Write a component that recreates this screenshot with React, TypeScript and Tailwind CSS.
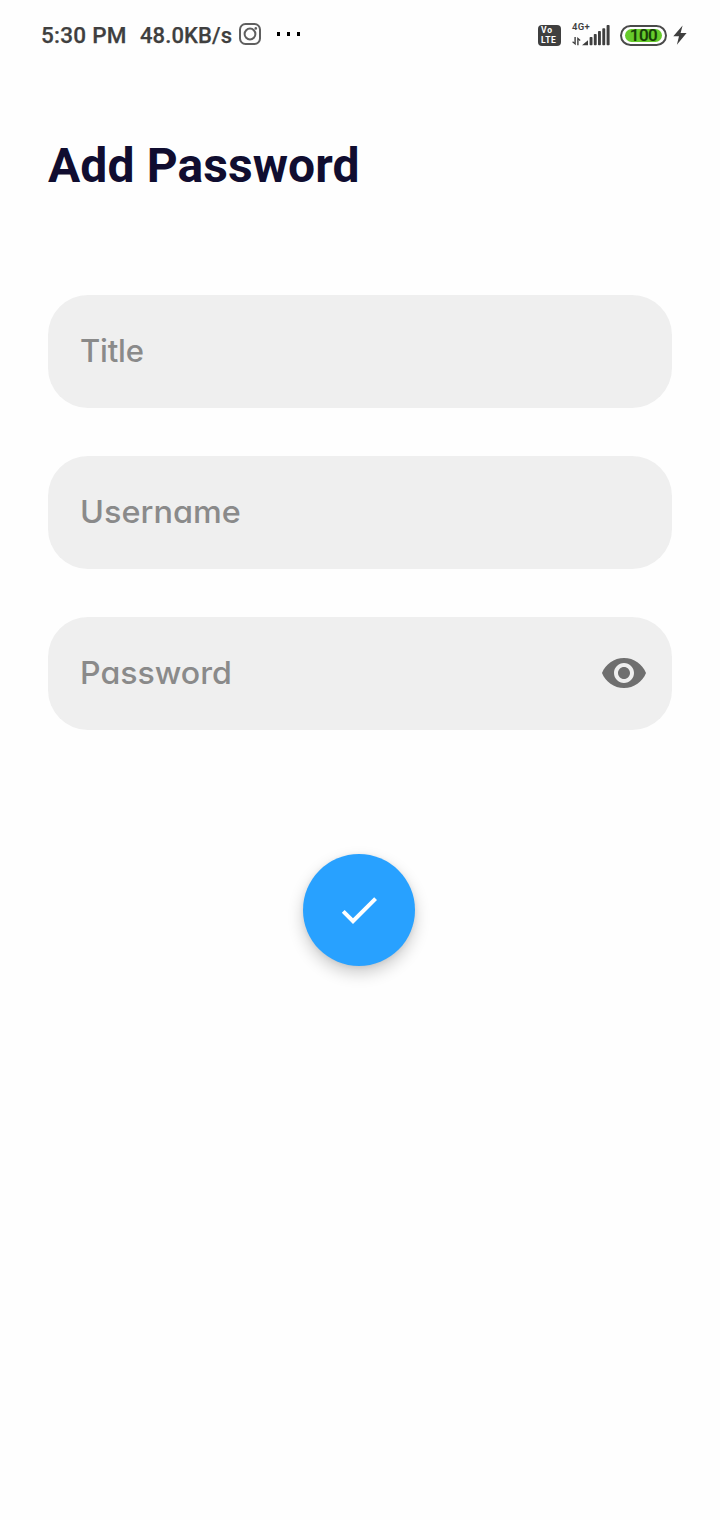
import type { ReactNode } from "react";

function StatusBar() {
  return (
    <header className="flex h-[70px] items-center justify-between pr-[33px] pl-[41px] text-[#3f3f3f]">
      <div className="flex items-center">
        <span className="w-[99px] whitespace-nowrap text-[22.5px] leading-[26px] font-medium tracking-[0.25px] [-webkit-text-stroke:0.25px_#3f3f3f]">5:30 PM</span>
        <span className="w-[98px] pt-[2px] whitespace-nowrap text-[22px] leading-[26px] font-medium tracking-[0.1px] [-webkit-text-stroke:0.25px_#3f3f3f]">48.0KB/s</span>
        <svg className="-mt-[2px] h-6 w-6" viewBox="0 0 24 24" fill="none" stroke="#5f5f5f" strokeWidth="2">
          <rect x="2" y="2" width="20" height="20" rx="5.5" />
          <circle cx="12" cy="12" r="5.4" />
          <circle cx="17.8" cy="6.4" r="1.3" fill="#5f5f5f" stroke="none" />
        </svg>
        <div className="-mt-[2px] ml-[15px] flex gap-[7px]">
          <i className="h-1 w-[3px] bg-black" />
          <i className="h-1 w-[3px] bg-black" />
          <i className="h-1 w-[3px] bg-black" />
        </div>
      </div>
      <div className="flex items-center">
        <div className="flex h-[21px] w-[23px] flex-col items-start justify-center rounded-[4px] bg-[#3f3f3f] pl-[3px] text-[8.5px] font-bold text-white">
          <span className="h-[9px] leading-[9px] tracking-[0.8px]">Vo</span>
          <span className="h-[9px] leading-[10px] tracking-[0.5px]">LTE</span>
        </div>
        <div className="ml-[11px] flex h-[26px] w-[38px] flex-col">
          <span className="h-[9px] text-[9.5px] leading-[9px] font-semibold tracking-[0.3px] whitespace-nowrap">4G+</span>
          <svg className="-mt-[6px] h-[21px] w-[38px] shrink-0" viewBox="0 0 38 21" fill="#3f3f3f">
            <path d="M2.4 12h1.4v8.2L.2 17.2l.8-.9 1.4 1.2z" />
            <path d="M5.2 20.2V12l3.4 3-.8.9-1.2-1v5.3z" />
            <path d="M10 20.2l6-5v5z" />
            <rect x="17.6" y="12" width="2.9" height="8.3" rx=".8" />
            <rect x="21.8" y="9" width="2.9" height="11.3" rx=".8" />
            <rect x="26" y="6" width="2.9" height="14.3" rx=".8" />
            <rect x="30.3" y="3.3" width="2.9" height="17" rx=".8" />
            <rect x="34.6" y="0" width="3" height="20.3" rx=".8" />
          </svg>
        </div>
        <div className="ml-[10px] flex h-[21px] w-[47px] items-center justify-center rounded-full border-2 border-[#4a4a4a] bg-white">
          <div className="flex h-[13px] w-[37px] items-center justify-center rounded-full bg-[#66cb2b] text-[17px] leading-[13px] font-medium tracking-[-0.5px] text-[#173d08] [-webkit-text-stroke:0.2px_#173d08]">
            100
          </div>
        </div>
        <svg className="ml-[6px] h-5 w-[14px]" viewBox="0 0 14 20" fill="#3f3f3f">
          <path d="M9.6 0.4L0.3 11.3H6L3.9 19.7L13.6 8H7.6z" />
        </svg>
      </div>
    </header>
  );
}

function Field({ children, icon }: { children: ReactNode; icon?: ReactNode }) {
  return (
    <div className="flex h-[113px] items-center justify-between rounded-[40px] bg-[#efefef] pr-6 pb-[2px] pl-8 font-['Inter'] text-[31px] leading-10 font-medium whitespace-nowrap text-[#8a8a8a] [font-feature-settings:'cv11']">
      {children}
      {icon}
    </div>
  );
}

export default function App() {
  return (
    <div className="h-[1520px] w-[720px] bg-[#fefefe] font-['Roboto',sans-serif]">
      <StatusBar />
      <main className="flex flex-col px-12 pt-[66px]">
        <h1 className="h-[60px] text-[48px] leading-[60px] font-bold tracking-[0.1px] whitespace-nowrap text-[#100d30]">Add Password</h1>
        <div className="mt-[99px] flex flex-col gap-12">
          <Field><span className="tracking-[-0.2px]">Title</span></Field>
          <Field><span className="origin-left scale-x-[1.045]">Username</span></Field>
          <Field
            icon={
              <svg className="mt-px h-12 w-12" viewBox="0 0 24 24" fill="#6f6f6f">
                <path d="M12 4.5C7 4.5 2.73 7.61 1 12c1.73 4.39 6 7.5 11 7.5s9.27-3.11 11-7.5c-1.73-4.39-6-7.5-11-7.5zM12 17c-2.76 0-5-2.24-5-5s2.24-5 5-5 5 2.24 5 5-2.24 5-5 5zm0-8c-1.66 0-3 1.34-3 3s1.34 3 3 3 3-1.34 3-3-1.34-3-3-3z" />
              </svg>
            }
          >
            <span className="origin-left scale-x-[1.035]">Password</span>
          </Field>
        </div>
        <button
          aria-label="Save"
          className="mt-[124px] ml-[255px] flex h-28 w-28 items-center justify-center rounded-full bg-[#28a1ff] shadow-[0_7px_16px_rgba(0,0,0,0.2),0_1px_5px_rgba(0,0,0,0.08)]"
        >
          <svg className="h-12 w-12" viewBox="0 0 24 24" fill="white">
            <path d="M9 16.17L4.83 12l-1.42 1.41L9 19 21 7l-1.41-1.41z" />
          </svg>
        </button>
      </main>
    </div>
  );
}
